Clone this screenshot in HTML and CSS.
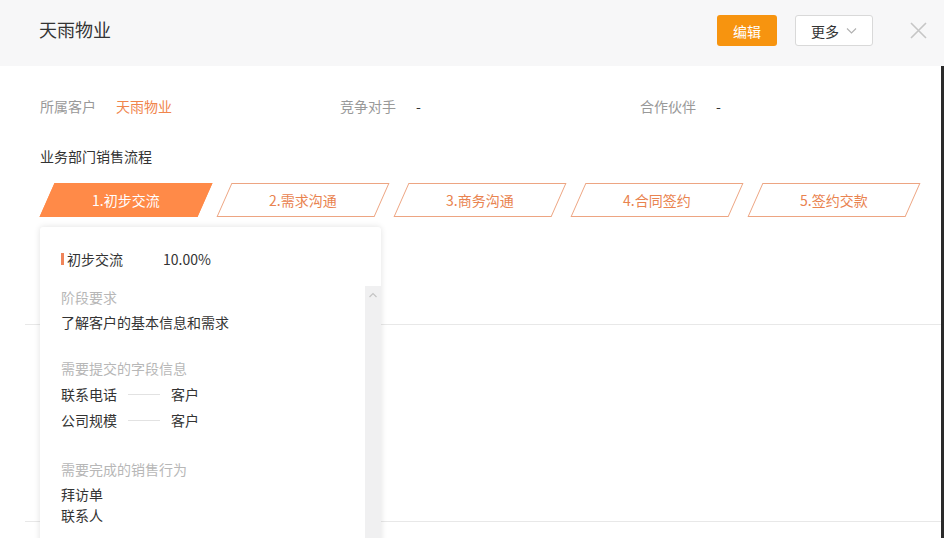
FILE: index.html
```html
<!DOCTYPE html>
<html lang="zh">
<head>
<meta charset="utf-8">
<title>天雨物业</title>
<link rel="stylesheet" href="styles.css">
</head>
<body>
<header class="header">
  <h1 class="title">天雨物业</h1>
  <div class="actions">
    <button class="btn btn-primary">编辑</button>
    <button class="btn btn-more">更多
      <svg class="chev" width="11" height="7" viewBox="0 0 11 7"><path d="M1 1.5 L5.5 6 L10 1.5" fill="none" stroke="#b0b0b0" stroke-width="1.1"/></svg>
    </button>
    <svg class="close" width="17" height="17" viewBox="0 0 17 17"><path d="M1 1 L16 16 M16 1 L1 16" stroke="#c6c6c6" stroke-width="1.6" fill="none"/></svg>
  </div>
</header>
<main class="main">
  <div class="info">
    <div class="info-item"><span class="label">所属客户</span><span class="value link">天雨物业</span></div>
    <div class="info-item"><span class="label">竞争对手</span><span class="value">-</span></div>
    <div class="info-item"><span class="label">合作伙伴</span><span class="value">-</span></div>
  </div>
  <div class="flow-title">业务部门销售流程</div>
  <div class="steps">
    <div class="step active"><span>1.初步交流</span></div>
    <div class="step"><span>2.需求沟通</span></div>
    <div class="step"><span>3.商务沟通</span></div>
    <div class="step"><span>4.合同签约</span></div>
    <div class="step"><span>5.签约交款</span></div>
  </div>
  <div class="section"></div>
  <div class="section-end"></div>

  <div class="popup">
    <div class="popup-head"><span class="bar"></span><span class="stage">初步交流</span><span class="pct">10.00%</span></div>
    <div class="popup-body">
      <div class="plabel first">阶段要求</div>
      <div class="ptext">了解客户的基本信息和需求</div>
      <div class="plabel second">需要提交的字段信息</div>
      <div class="field"><span class="fname">联系电话</span><span class="fline"></span><span>客户</span></div>
      <div class="field"><span class="fname">公司规模</span><span class="fline"></span><span>客户</span></div>
      <div class="plabel third">需要完成的销售行为</div>
      <div class="acts">
        <div>拜访单</div>
        <div>联系人</div>
      </div>
    </div>
    <div class="scrollbar">
      <svg width="10" height="6" viewBox="0 0 10 6"><path d="M1.5 5 L5 1.5 L8.5 5" fill="none" stroke="#c4c4c4" stroke-width="1.2"/></svg>
    </div>
  </div>
</main>
</body>
</html>
```
FILE: styles.css
```css
* { box-sizing: border-box; }
html, body { margin: 0; padding: 0; }
body {
  width: 944px;
  height: 538px;
  overflow: hidden;
  background: #fff;
  font-family: "Noto Sans CJK SC", "Microsoft YaHei", sans-serif;
  font-size: 14px;
  color: #333;
}
.header {
  height: 66px;
  background: #f7f7f8;
  display: flex;
  align-items: flex-start;
  justify-content: space-between;
  padding: 15px 17px 0 39px;
}
.title {
  margin: 0;
  font-size: 18px;
  font-weight: normal;
  line-height: 29px;
  color: #333;
}
.actions {
  display: flex;
  align-items: center;
  height: 31px;
}
.btn {
  font-family: inherit;
  font-size: 14px;
  height: 31px;
  border-radius: 3px;
  cursor: pointer;
  padding: 0;
}
.btn-primary {
  width: 60px;
  background: #f7940f;
  border: none;
  color: #fff;
}
.btn-more {
  width: 78px;
  margin-left: 18px;
  background: #fff;
  border: 1px solid #d9d9d9;
  color: #333;
  display: flex;
  align-items: center;
  padding-left: 15px;
  gap: 7px;
}
.chev { display: block; }
.close { margin-left: 37px; display: block; }

.main {
  position: relative;
  height: 472px;
  border-right: 3px solid #2a2a2a;
  padding: 29px 0 0 40px;
}
.info {
  display: flex;
  line-height: 22px;
}
.info-item {
  width: 300px;
  display: flex;
  gap: 20px;
}
.label { color: #999; }
.value { color: #333; }
.link { color: #f0854c; }
.flow-title {
  margin-top: 28px;
  line-height: 22px;
  color: #333;
}
.steps {
  display: flex;
  gap: 19px;
  margin-top: 16px;
  padding-left: 7px;
}
.step {
  width: 158px;
  height: 34px;
  border: 1px solid #eda582;
  transform: skewX(-23.8deg);
  display: flex;
  align-items: center;
  justify-content: center;
  color: #e9834f;
}
.step span { transform: skewX(23.8deg); margin-top: -1px; }
.step.active {
  background: #ff8a48;
  border-color: #ff8a48;
  color: #fff;
}
.section {
  margin-left: -15px;
  margin-top: 107px;
  height: 197px;
  border-top: 1px solid #e8e8e8;
}
.section-end {
  margin-left: -15px;
  border-top: 1px solid #e8e8e8;
}

.popup {
  position: absolute;
  left: 40px;
  top: 161px;
  width: 341px;
  height: 330px;
  background: #fff;
  border-radius: 3px;
  box-shadow: 0 0 6px rgba(0,0,0,0.12);
  padding: 21px 0 0 21px;
}
.popup-head {
  display: flex;
  align-items: center;
  line-height: 22px;
  height: 22px;
}
.bar {
  width: 3px;
  height: 12px;
  background: #f0855a;
  margin-right: 3px;
}
.pct { margin-left: 40px; }
.plabel {
  color: #b7b7b7;
  line-height: 25px;
}
.plabel.first { margin-top: 15px; }
.plabel.second { margin-top: 21px; }
.plabel.third { margin-top: 24px; }
.ptext { line-height: 25px; }
.field {
  display: flex;
  align-items: center;
  line-height: 26px;
}
.fline {
  width: 32px;
  height: 1px;
  background: #e2e2e2;
  margin: 0 11px;
}
.acts {
  margin-top: 2px;
  line-height: 21px;
}
.scrollbar {
  position: absolute;
  right: 0;
  top: 59px;
  width: 16px;
  bottom: 0;
  background: #f0f0f1;
  display: flex;
  justify-content: center;
  padding-top: 6px;
}
.scrollbar svg { display: block; }
```
